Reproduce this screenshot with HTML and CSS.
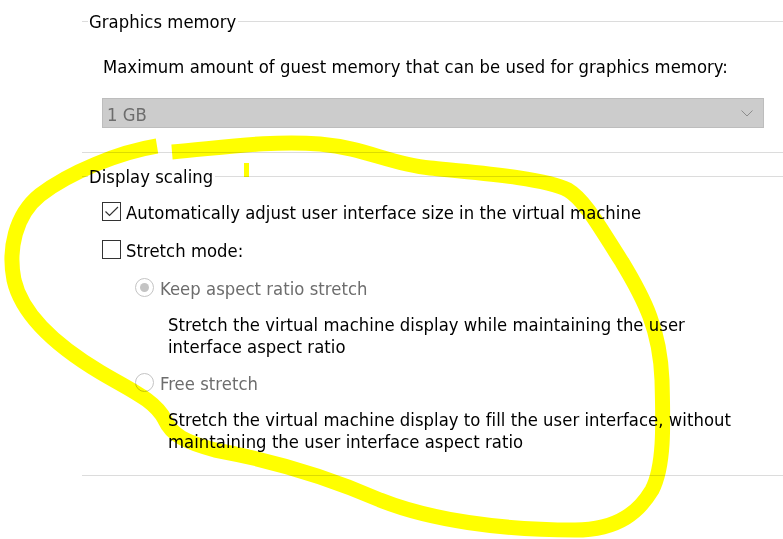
FILE: index.html
```html
<!DOCTYPE html>
<html lang="en">
<head>
<meta charset="utf-8">
<title>Display settings</title>
<link rel="stylesheet" href="styles.css">
</head>
<body>
<div class="panel">
  <section class="group group-gfx">
    <h2 class="group-title">Graphics memory</h2>
    <p class="label">Maximum amount of guest memory that can be used for graphics memory:</p>
    <div class="select">
      <span class="select-value">1 GB</span>
      <svg class="chev" width="12" height="7" viewBox="0 0 12 7"><polyline points="0.5,0.5 6,6 11.5,0.5" fill="none" stroke="#8c8c8c" stroke-width="1"/></svg>
    </div>
  </section>
  <section class="group group-display">
    <h2 class="group-title">Display scaling</h2>
    <div class="check-row row-auto">
      <span class="checkbox"><svg width="17" height="17" viewBox="0 0 17 17"><polyline points="2.5,8.5 6.5,12.5 15,4" fill="none" stroke="#333" stroke-width="1.2"/></svg></span>
      <span class="row-text">Automatically adjust user interface size in the virtual machine</span>
    </div>
    <div class="check-row row-stretch">
      <span class="checkbox"></span>
      <span class="row-text">Stretch mode:</span>
    </div>
    <div class="radio-row row-keep">
      <span class="radio radio-on"></span>
      <span class="row-text disabled">Keep aspect ratio stretch</span>
    </div>
    <p class="desc desc-keep">Stretch the virtual machine display while maintaining the user<br>interface aspect ratio</p>
    <div class="radio-row row-free">
      <span class="radio"></span>
      <span class="row-text disabled">Free stretch</span>
    </div>
    <p class="desc desc-free">Stretch the virtual machine display to fill the user interface, without<br>maintaining the user interface aspect ratio</p>
  </section>
</div>
<svg class="annotation" width="783" height="539" viewBox="0 0 783 539">
  <path d="M157,146 C120,152 70,172 40,195 C15,215 8,250 14,280 C22,315 55,345 100,372 C130,390 155,400 165,420 C172,435 185,442 215,450 C280,462 330,478 380,500 C430,520 500,530 575,530 C620,530 640,510 652,490 C665,465 663,420 662,380 C660,330 645,300 622,262 C600,228 585,200 568,190 C545,178 480,173 430,168 C390,164 365,148 320,144 C270,140 220,148 172,152" fill="none" stroke="#ffff00" stroke-width="15" stroke-linejoin="round"/>
  <line x1="246.5" y1="163" x2="246.5" y2="177" stroke="#ffff00" stroke-width="5"/>
</svg>
</body>
</html>
```

FILE: styles.css
```css
html, body {
  margin: 0;
  padding: 0;
  background: #ffffff;
}

body {
  width: 783px;
  height: 539px;
  overflow: hidden;
  position: relative;
  font-family: "DejaVu Sans Condensed", "DejaVu Sans", sans-serif;
  font-size: 18.3px;
  letter-spacing: 0.05px;
  line-height: 22px;
  color: #000000;
}

.panel {
  display: flex;
  flex-direction: column;
  padding: 21px 0 0 82px;
}

.group {
  display: flex;
  flex-direction: column;
  align-items: flex-start;
  border-top: 1px solid #dcdcdc;
}

.group-gfx {
  border-bottom: 1px solid #dcdcdc;
  padding-bottom: 24px;
}

.group-display {
  margin-top: 23px;
  border-bottom: 1px solid #dcdcdc;
  padding-bottom: 22px;
}

.group-title {
  margin: -11px 0 0 6px;
  padding: 0 2px 0 1px;
  background: #ffffff;
  font-size: 18.3px;
  font-weight: normal;
  line-height: 22px;
}

.label {
  margin: 23px 0 0 21px;
}

.select {
  box-sizing: border-box;
  margin: 20px 0 0 20px;
  width: 662px;
  height: 30px;
  border: 1px solid #bdbdbd;
  background: #cccccc;
  padding: 3px 10px 0 4px;
  display: flex;
  justify-content: space-between;
  align-items: flex-start;
}

.select-value {
  line-height: 25px;
  color: #6d6d6d;
}

.chev {
  align-self: center;
  margin-top: -3px;
}

.check-row,
.radio-row {
  display: flex;
  align-items: flex-start;
  gap: 5px;
}

.check-row {
  margin-left: 20px;
}

.row-auto {
  margin-top: 14px;
}

.row-stretch {
  margin-top: 16px;
}

.checkbox {
  box-sizing: border-box;
  width: 19px;
  height: 19px;
  border: 1px solid #333333;
  background: #ffffff;
  display: flex;
}

.radio-row {
  margin-left: 53px;
  gap: 6px;
}

.row-keep {
  margin-top: 16px;
}

.row-free {
  margin-top: 15px;
}

.radio {
  box-sizing: border-box;
  width: 19px;
  height: 19px;
  border: 1px solid #c4c4c4;
  border-radius: 50%;
  background: #ffffff;
  display: flex;
  align-items: center;
  justify-content: center;
}

.radio-on::after {
  content: "";
  width: 9px;
  height: 9px;
  border-radius: 50%;
  background: #c4c4c4;
}

.disabled {
  color: #6d6d6d;
}

.desc {
  margin: 14px 0 0 86px;
}

.annotation {
  position: absolute;
  left: 0;
  top: 0;
  pointer-events: none;
  mix-blend-mode: multiply;
}
```
